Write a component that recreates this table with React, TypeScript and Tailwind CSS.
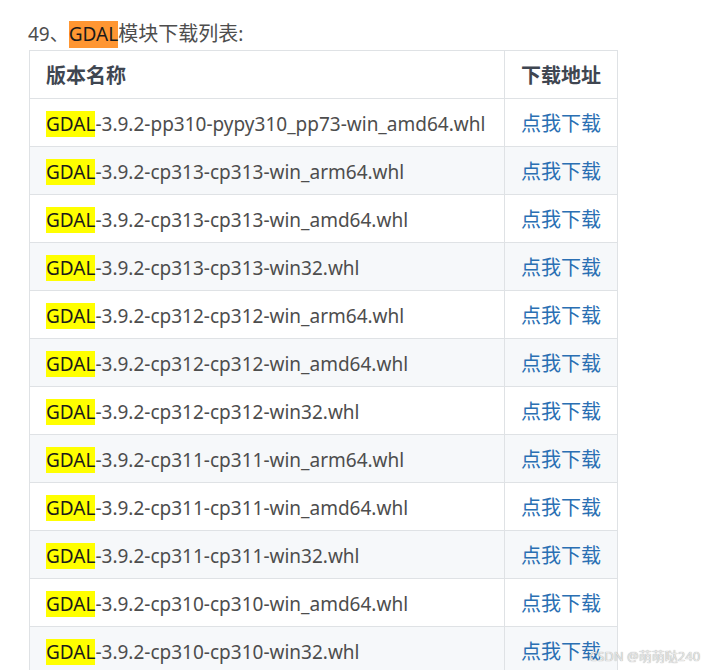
import React from 'react';

const files = [
  '-3.9.2-pp310-pypy310_pp73-win_amd64.whl',
  '-3.9.2-cp313-cp313-win_arm64.whl',
  '-3.9.2-cp313-cp313-win_amd64.whl',
  '-3.9.2-cp313-cp313-win32.whl',
  '-3.9.2-cp312-cp312-win_arm64.whl',
  '-3.9.2-cp312-cp312-win_amd64.whl',
  '-3.9.2-cp312-cp312-win32.whl',
  '-3.9.2-cp311-cp311-win_arm64.whl',
  '-3.9.2-cp311-cp311-win_amd64.whl',
  '-3.9.2-cp311-cp311-win32.whl',
  '-3.9.2-cp310-cp310-win_amd64.whl',
  '-3.9.2-cp310-cp310-win32.whl',
];

const font = "font-['Noto_Sans','Noto_Sans_CJK_SC',sans-serif]";

const App: React.FC = () => {
  return (
    <div className={`relative h-[670px] overflow-hidden bg-white pl-[28px] pt-[20px] text-[19px] text-[#4d4d4d] ${font}`}>
      <p className="h-[30px] leading-[28px]">
        49、<span className="bg-[#ff9632] pb-px text-[#1a1a1a]">GDAL</span>
        <span className="text-[20px]">模块下载列表</span>:
      </p>
      <table className="ml-px w-[589px] border-collapse">
        <thead>
          <tr className="h-[48px]">
            <th className="w-[475px] border border-[#dfe2e5] px-4 pt-[3px] text-left text-[20px] font-bold text-[#3f4651]">版本名称</th>
            <th className="border border-[#dfe2e5] px-4 pt-[3px] text-left text-[20px] font-bold text-[#3f4651]">下载地址</th>
          </tr>
        </thead>
        <tbody>
          {files.map((f, i) => (
            <tr key={f} className={`h-[48px] ${i % 2 === 1 ? 'bg-[#f6f8fa]' : 'bg-white'}`}>
              <td className="whitespace-nowrap border border-[#dfe2e5] px-4 pt-[3px]">
                <span className="bg-[#ffff00] text-[#1a1a1a]">GDAL</span>
                {f}
              </td>
              <td className="border border-[#dfe2e5] px-4 pt-[3px] text-[20px]">
                <a href="#" className="text-[#2a6fb3]">点我下载</a>
              </td>
            </tr>
          ))}
        </tbody>
      </table>
      <div className="absolute left-[589px] top-[647px] whitespace-nowrap text-[13px] leading-[18px] text-[#e8e8e8] [text-shadow:0_0_1px_#8a8a8a]">
        CSDN @萌萌哒240
      </div>
    </div>
  );
};

export default App;
